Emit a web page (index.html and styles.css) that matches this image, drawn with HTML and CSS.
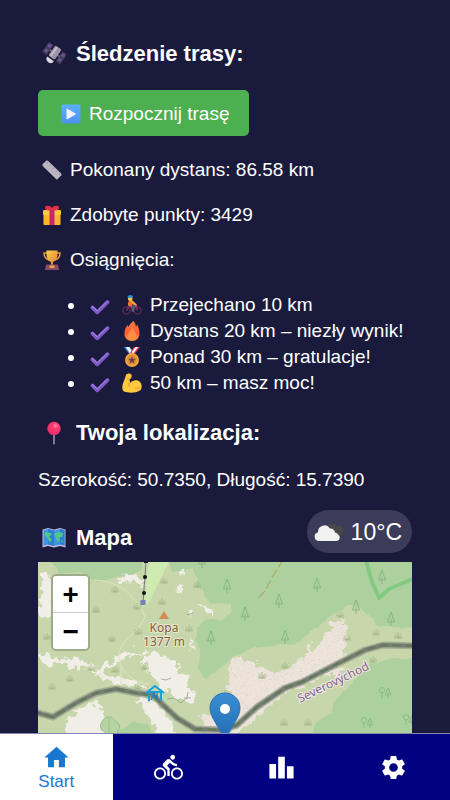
FILE: index.html
```
<!DOCTYPE html>
<html lang="pl">
<head>
<meta charset="utf-8">
<meta name="viewport" content="width=device-width, initial-scale=1">
<title>Śledzenie trasy</title>
<link rel="stylesheet" href="styles.css">
</head>
<body>
<svg class="defs" aria-hidden="true">
  <defs>
    <linearGradient id="gold" x1="0" y1="0" x2="1" y2="1"><stop offset="0" stop-color="#ffd34d"/><stop offset="1" stop-color="#d97a35"/></linearGradient>
    <linearGradient id="flameFill" x1="0" y1="0" x2="0" y2="1"><stop offset="0" stop-color="#ff783d"/><stop offset="0.6" stop-color="#ff5c35"/><stop offset="1" stop-color="#ff9a45"/></linearGradient>
    <linearGradient id="blueFill" x1="0" y1="0" x2="0" y2="1"><stop offset="0" stop-color="#5cb0ff"/><stop offset="1" stop-color="#4c92f0"/></linearGradient>
    <linearGradient id="tickFill" x1="0" y1="0" x2="1" y2="1"><stop offset="0" stop-color="#8a62d8"/><stop offset="1" stop-color="#7550b8"/></linearGradient>
    <radialGradient id="pinFill" cx="0.6" cy="0.3" r="0.7"><stop offset="0" stop-color="#ff8fa0"/><stop offset="0.3" stop-color="#fb3f70"/><stop offset="1" stop-color="#e8296a"/></radialGradient>
    <linearGradient id="markerFill" x1="0" y1="0" x2="0" y2="1"><stop offset="0" stop-color="#3b8fd4"/><stop offset="1" stop-color="#2069b0"/></linearGradient>
    <symbol id="tick" viewBox="0 0 20 20">
      <path d="M2.500 10.500 7.200 15.300 17.500 5.200" fill="none" stroke="url(#tickFill)" stroke-width="3.800" stroke-linejoin="round" stroke-linecap="round"/>
      <path d="M2.500 9.600 7.200 14 17.300 4.500" fill="none" stroke="#a38bdc" stroke-width="1" stroke-linecap="round"/>
    </symbol>
    <symbol id="shrub" viewBox="0 0 10 8"><path d="M1 7H9M5 7V1M5 7 2 2.500M5 7 8 2.500M5 7 1 5M5 7 9 5" fill="none" stroke="#a3b586" stroke-width=".8"/></symbol>
    <symbol id="conifer" viewBox="0 0 10 16"><path d="M5 1 1.500 11H8.500ZM5 8V15" fill="none" stroke="#8bb580" stroke-width="1"/></symbol>
    <symbol id="grove" viewBox="0 0 14 12"><path d="M4 11V5M4 6a2.700 2.700 0 1 1 .1 0M10 1 7 8H13ZM10 5V11" fill="none" stroke="#8bb580" stroke-width=".9"/></symbol>
    <filter id="rough" x="-10%" y="-10%" width="120%" height="120%">
      <feTurbulence type="fractalNoise" baseFrequency="0.14" numOctaves="3" seed="4" result="n"/>
      <feDisplacementMap in="SourceGraphic" in2="n" scale="14" xChannelSelector="R" yChannelSelector="G"/>
    </filter>
    <filter id="edge"><feTurbulence type="fractalNoise" baseFrequency="0.1" numOctaves="2" seed="2" result="n"/><feDisplacementMap in="SourceGraphic" in2="n" scale="5" xChannelSelector="R" yChannelSelector="G"/></filter>
    <pattern id="stipple" width="5" height="5" patternUnits="userSpaceOnUse"><rect width="5" height="5" fill="#ece3da"/><circle cx="1" cy="1" r=".5" fill="#dccfc6"/><circle cx="3.500" cy="3.500" r=".5" fill="#dccfc6"/></pattern>
  </defs>
</svg>

<div class="app">
  <main class="content">
    <h2 class="title">
      <svg class="title-icon" viewBox="0 0 24 24" aria-hidden="true">
        <g transform="rotate(35 12 12)">
          <path d="M1 5H6.500V17H1ZM17.500 5H23V17H17.500Z" fill="#453e59"/>
          <path d="M2.200 6.500H5.300V9.500H2.200ZM2.200 12H5.300V15H2.200ZM18.700 6.500H21.800V9.500H18.700ZM18.700 12H21.800V15H18.700Z" fill="#6c549a"/>
          <path d="M6 11H18" stroke="#7b7388" stroke-width="1.500"/>
          <rect x="8.200" y="4" width="7.600" height="12.500" rx="1.500" fill="#9c93a8"/><path d="M10.500 5V15.500" stroke="#c3bccb" stroke-width="2"/>
          <path d="M8 18H16A4 4 0 0 1 8 18Z" fill="#ded9e4"/>
        </g>
      </svg>Śledzenie trasy:</h2>
    <button class="start-button" type="button">
      <svg class="text-icon" viewBox="0 0 20 20" aria-hidden="true"><rect x=".5" y=".5" width="19" height="19" rx="1.500" fill="url(#blueFill)"/><path d="M6 5V15L14.500 10Z" fill="#f7f1ff" stroke="#f7f1ff" stroke-linejoin="round"/></svg>Rozpocznij trasę</button>

    <p class="line">
      <svg class="text-icon" viewBox="0 0 20 20" aria-hidden="true"><path d="M.5 4.300 4.500 .6Q5.200 .1 6 .8L19.200 13.500Q19.900 14.400 19.300 15.200L15.500 19.200Q14.800 19.700 14 19.100L.7 6Q.1 5 .5 4.300Z" fill="#bbb5c1"/><path d="M6 2 4.800 3.500M9 4.500 8 5.800M12 7.500 11 8.800M15 10.500 14 11.800M18 13.500 17 14.800" stroke="#8d7aa5" stroke-width=".9"/></svg>Pokonany dystans: 86.58 km</p>
    <p class="line">
      <svg class="text-icon" viewBox="0 0 20 20" aria-hidden="true"><rect x="1.500" y="9" width="17" height="11" rx="1" fill="#fbb52f"/><rect x="1" y="5" width="18" height="5" rx="1" fill="#ffc93b"/><rect x="7.500" y="5" width="5" height="15" fill="#c8286b"/><path d="M10 5C6 6 2.500 5 3 2.500S8 0 10 3C12 0 16.500 0 17 2.500S14 6 10 5Z" fill="#e52f45"/></svg>Zdobyte punkty: 3429</p>
    <p class="line">
      <svg class="text-icon" viewBox="0 0 20 20" aria-hidden="true"><path d="M5 3H2C2 7 4 9 7 10M15 3H18C18 7 16 9 13 10" fill="none" stroke="#e99a3d" stroke-width="1.500"/><path d="M4.500 .5H15.500C16 8 14 11 11 12V15H9V12C6 11 4 8 4.500 .5Z" fill="url(#gold)"/><path d="M4 14.500H16L17 20H3Z" fill="#8b4a66"/><rect x="7.500" y="15.500" width="5" height="2.500" fill="#e5a94c"/></svg>Osiągnięcia:</p>

    <ul class="achievements">
      <li><svg class="text-icon tick" aria-hidden="true"><use href="#tick"/></svg><svg class="text-icon" viewBox="0 0 20 20" aria-hidden="true"><g fill="none" stroke="#5b2c54" stroke-width="1.400"><circle cx="4.500" cy="15.500" r="3.600"/><circle cx="15.500" cy="15.500" r="3.600"/></g><path d="M4.500 15.500 8 10.500 11 15.500 14 10 15.500 15.500" fill="none" stroke="#a93050" stroke-width="1.200"/><path d="M7 10 12 12 10.500 16.500" fill="none" stroke="#4e5c85" stroke-width="2.600"/><path d="M6 10.500C5.500 7 7 4.500 10.500 5.500L14 9 12.500 10.500 10.500 9 9.500 11.500Z" fill="#f3762f"/><path d="M10 6.500 14 10" stroke="#ffbc45" stroke-width="1.600" stroke-linecap="round"/><circle cx="8.200" cy="3.700" r="2.300" fill="#ffc452"/><path d="M5.500 3Q5.500 0 8.300 0T11 2.800Z" fill="#328dd0"/></svg>Przejechano 10 km</li>
      <li><svg class="text-icon tick" aria-hidden="true"><use href="#tick"/></svg><svg class="text-icon" viewBox="0 0 20 20" aria-hidden="true"><path d="M11.500 0C9 2 7 4 6.500 6L5.500 4C3 7 2.500 10 2.500 13C2.500 17 5.500 20 10 20S17.500 17 17.500 12.500C17.500 9 16.500 6 15 3.500L14 6C13.500 3 12.500 1 11.500 0Z" fill="url(#flameFill)"/><path d="M11 6C11 10 14 10 14 14.500C14 17.500 12 19 10 19S5.500 17 5.500 14.500 9 9.500 11 6Z" fill="#ff8d42"/></svg>Dystans 20 km – niezły wynik!</li>
      <li><svg class="text-icon tick" aria-hidden="true"><use href="#tick"/></svg><svg class="text-icon" viewBox="0 0 20 20" aria-hidden="true"><path d="M2 0H8L12 6 8 8Z" fill="#4b91e5"/><path d="M4 0H7L11 6 9 8Z" fill="#fff"/><path d="M18 0H12L8 6 12 8Z" fill="#d93d5c"/><path d="M16 0H13.500L10 5 11 7Z" fill="#fff"/><circle cx="10" cy="13" r="7" fill="#f2a53b"/><circle cx="10" cy="13" r="5" fill="#df8e38"/><path d="m10 9.200 1.100 2.500 2.700.3-2 1.800.6 2.700-2.400-1.400-2.400 1.400.6-2.700-2-1.800 2.700-.3Z" fill="#70433f"/></svg>Ponad 30 km – gratulacje!</li>
      <li><svg class="text-icon tick" aria-hidden="true"><use href="#tick"/></svg><svg class="text-icon" viewBox="0 0 20 20" aria-hidden="true"><path d="M4 2C5 0 9 0 9.500 2S9 6 7.500 6.500L8 10C11 6.500 15 6.500 17.500 8.500C20.500 11 20 16 18 17.500C13 20.500 6 20 2 18.500C-.5 17 0 12 2 8Z" fill="#ffc83d"/><path d="M7 6 5 5.500M8 10C6.500 11 6.500 13 8 14M13 15C15 16 17 15 18 14" fill="none" stroke="#e8972e" stroke-width="1"/></svg>50 km – masz moc!</li>
    </ul>

    <h2 class="title location-title">
      <svg class="title-icon" viewBox="0 0 24 24" aria-hidden="true"><path d="M12 12V22.500" stroke="#8f8799" stroke-width="1.800" stroke-linecap="round"/><circle cx="12" cy="7.500" r="6.700" fill="url(#pinFill)"/></svg>Twoja lokalizacja:</h2>
    <p class="line">Szerokość: 50.7350, Długość: 15.7390</p>

    <section class="map-section">
      <h2 class="title">
        <svg class="title-icon" viewBox="0 0 24 24" aria-hidden="true"><path d="M.5 3.500 6 2 12 3.500 18 2 23.500 3.500V21.500L18 20 12 21.500 6 20 .5 21.500Z" fill="#c8b8dc"/><path d="M1.500 4 6 3 12 4.500 18 3 22.500 4V19.500L18 18.500 12 20 6 18.500 1.500 19.500Z" fill="#3e95e0"/><path d="M6 3 12 4.500V20L6 18.500ZM18 3 22.500 4V19.500L18 18.500Z" fill="#2c7ed0"/><path d="M3 6 9 7 10 9 7 10 8 12 10 13 8 17 6 13 3 9ZM13 7 17 6 21 7 20 11 17 11 18 14 16 16 14 12 12.500 10ZM19 14 21 15 20 17Z" fill="#52c68a"/></svg>Mapa</h2>
      <div class="weather">
        <svg class="weather-icon" viewBox="0 0 32 24" aria-hidden="true"><path d="M12 14A4.500 4.500 0 0 1 14 6A6 6 0 0 1 24 6A4.300 4.300 0 0 1 30 10A3 3 0 0 1 29 15H20Z" fill="#484848"/><path d="M5.500 21A4.500 4.500 0 0 1 5 12.200A6.500 6.500 0 0 1 17 8.500A4.500 4.500 0 0 1 22 12.500A4 4 0 0 1 25 14.500A3.500 3.500 0 0 1 24 21Z" fill="#f2f2f2"/></svg>10°C</div>
      <div class="map">
        <svg class="map-canvas" viewBox="0 0 374 300" preserveAspectRatio="xMidYMin slice" role="img" aria-label="Mapa okolicy">
          <rect width="374" height="300" fill="#c8d7ab"/>
          <g fill="#add19e" filter="url(#edge)">
            <path d="M10-5 22 12 40 10 60 20 75 16 95 12 104 8 106-5ZM129-5 134 10 148 8 154 6 160 18 158 24 166 28 172 42 188 40 194 45 192 52 182 58 168 56 160 66 158 78 163 90 160 103 164 114 169 118 180 108 190 100 200 92 215 86 235 84 250 83 262 80 272 70 285 60 300 50 308 43 319 45 330 52 340 63 355 66 385 67V-5Z"/>
            <path d="M275 171 277 161 294 151 295 141 314 121 330 104 354 96 385 98V320H270Z"/>
            <path d="M75 175 80 168 95 160 110 163 118 175Z"/>
          </g>
          <path d="M171 49C176 44 184 47 192 41L194 49C188 56 176 59 167 55Z" fill="#c8d7ab"/>
          <path d="M111-2H132L127 7 124 14 118 26 112 39 105 46 108 25Z" fill="#cdebb0"/>
          <g fill="#f1eee7" filter="url(#rough)">
            <path d="M3 12 10 10 18 22 14 45 17 52 9 55 0 50Z"/>
            <path d="M80 18 95 10 100 17 107 18 104 22 88 21Z"/>
            <path d="M0 91 12 95 23 98 32 94 48 99 55 106 38 107 24 102 8 104Z"/>
            <path d="M46 105 60 107 72 100 84 91 96 87 102 93 92 95 78 101 64 112Z"/>
            <path d="M55 111 77 116 100 119 112 126 98 124 78 123Z"/>
            <path d="M104 92 118 91 130 95 132 121 128 130 110 110 103 98Z"/>
            <path d="M128 95 140 98 142 110 152 113 148 124 158 130 155 140 134 135 126 116Z"/>
            <path d="M29 177 28 158 39 147 54 140 66 150 72 165 75 179Z"/>
            <path d="M98 137 115 136 132 158 139 172 120 176 112 158Z"/>
            <path d="M140 8 147 10 143 15ZM138 24 145 25 142 32ZM162 42 172 46 175 54 166 49ZM149 50 157 51 154 56ZM153 75 158 85 154 90Z"/>
          </g>
          <path d="M64 160a7 7 0 0 1 13-1 6 6 0 0 1 3 10 7 7 0 0 1-13 1 6 6 0 0 1-3-10ZM71 157V177" fill="#b6d3a2" stroke="#9bc08c"/>
          <g fill="url(#stipple)" filter="url(#rough)">
            <path d="M190 118 193 100 200 96 210 102 216 98 226 107 240 112 253 105 268 93 270 81 276 90 286 75 296 57 307 59 309 76 306 97 290 111 250 130 218 156 200 171 170 174 162 155 182 148 191 135Z"/>
            <path d="M290 112 309 103 300 117Z"/>
          </g>
          <path d="M56 18C82 19 98 34 107 55C98 75 80 79 81 95C83 112 96 121 112 122M83 103V125" fill="none" stroke="#dee5bd" stroke-width="1"/>
          <path d="M328-2 334 20 341 36 351 27 374 17" fill="none" stroke="#83c982" stroke-width="4" stroke-linejoin="round"/>
          <path d="M245-2 235 14 227 29 219 37" fill="none" stroke="#b1a95e" stroke-width="1.200" stroke-dasharray="9 3"/>
          <g fill="none" stroke="#8a9586" stroke-width="1" opacity=".7"><path d="M123 117 128 118 133 116M129 137 136 136 143 141 149 136 150 130M146 136 153 136M149 53 155 51"/></g>
          <g>
            <use href="#shrub" x="72" y="23" width="10" height="8"/><use href="#shrub" x="53" y="43" width="10" height="8"/><use href="#shrub" x="94" y="40" width="10" height="8"/><use href="#shrub" x="119" y="35" width="10" height="8"/><use href="#shrub" x="95" y="65" width="10" height="8"/><use href="#shrub" x="69" y="72" width="10" height="8"/><use href="#shrub" x="4" y="70" width="10" height="8"/><use href="#shrub" x="48" y="101" width="10" height="8"/><use href="#shrub" x="27" y="112" width="10" height="8"/><use href="#shrub" x="9" y="120" width="10" height="8"/><use href="#shrub" x="102" y="100" width="10" height="8"/><use href="#shrub" x="72" y="103" width="10" height="8"/><use href="#shrub" x="95" y="120" width="10" height="8"/><use href="#shrub" x="121" y="14" width="10" height="8"/><use href="#shrub" x="154" y="18" width="10" height="8"/><use href="#shrub" x="146" y="62" width="10" height="8"/><use href="#shrub" x="219" y="109" width="10" height="8"/><use href="#shrub" x="242" y="99" width="10" height="8"/><use href="#shrub" x="297" y="48" width="10" height="8"/><use href="#shrub" x="333" y="66" width="10" height="8"/><use href="#shrub" x="355" y="69" width="10" height="8"/><use href="#shrub" x="304" y="71" width="10" height="8"/><use href="#shrub" x="330" y="93" width="10" height="8"/><use href="#shrub" x="241" y="156" width="10" height="8"/><use href="#shrub" x="265" y="156" width="10" height="8"/><use href="#shrub" x="182" y="127" width="10" height="8"/>
            <use href="#conifer" x="159" y="-9" width="10" height="16"/><use href="#conifer" x="184" y="16" width="10" height="16"/><use href="#conifer" x="236" y="31" width="10" height="16"/><use href="#conifer" x="202" y="44" width="10" height="16"/><use href="#conifer" x="168" y="68" width="10" height="16"/><use href="#conifer" x="242" y="67" width="10" height="16"/><use href="#conifer" x="274" y="15" width="10" height="16"/><use href="#conifer" x="339" y="7" width="10" height="16"/><use href="#conifer" x="348" y="49" width="10" height="16"/><use href="#conifer" x="313" y="37" width="10" height="16"/><use href="#grove" x="340" y="125" width="14" height="12"/><use href="#grove" x="322" y="155" width="14" height="12"/><use href="#grove" x="364" y="152" width="14" height="12"/>
          </g>
          <g fill="none" stroke-linejoin="round">
            <path d="M-5 150 0 151 15 155 38 141 58 131 78 127 98 131 115 133 124 142 139 156 157 167 185 168 199 163 219 145 247 126 264 120 297 103 327 88 345 83 380 84" stroke="#8e9685" stroke-opacity=".65" stroke-width="7"/>
            <path d="M-5 150 0 151 15 155 38 141 58 131 78 127 98 131 115 133 124 142 139 156 157 167 185 168 199 163 219 145 247 126 264 120 297 103 327 88 345 83 380 84" stroke="#747e72" stroke-width="4"/>
            <path d="M-5 150 0 151 15 155 38 141 58 131 78 127 98 131 115 133 124 142 139 156 157 167 185 168 199 163 219 145 247 126 264 120 297 103 327 88 345 83 380 84" stroke="#647a59" stroke-width="2" stroke-dasharray="8 5"/>
          </g>
          <path d="M108-2 107 14 105 40" fill="none" stroke="#777" stroke-width="1"/><circle cx="107" cy="15" r="2" fill="#111"/><circle cx="106" cy="31" r="2" fill="#111"/><rect x="106" y="-1" width="4" height="2" fill="#111"/><rect x="102.500" y="38" width="5" height="5" fill="#7780b8"/>
          <path d="M126 49 131 57H121Z" fill="#d08e54"/>
          <text class="peak" text-anchor="middle"><tspan x="126" y="70">Kopa</tspan><tspan x="126" y="84">1377 m</tspan></text>
          <path d="M108 131 117 124 126 131M111 129V139M123 129V139M111 130H123" fill="none" stroke="#14a2dc" stroke-width="2"/><path d="M116 130 115 134 113 138M116 132 119 138M119 131V138" fill="none" stroke="#147fc5" stroke-width="1.200"/>
          <text class="street" text-anchor="middle" transform="translate(297 124) rotate(-26)">Severovýchod</text>
          <path d="M187 131C179 131 172 137 172 146C172 156 181 163 187 180C193 163 202 156 202 146C202 137 195 131 187 131Z" fill="url(#markerFill)" stroke="#2b75b5" stroke-width="1"/><circle cx="187" cy="147" r="5" fill="#fff"/>
        </svg>
        <div class="zoom"><button type="button" aria-label="Przybliż">+</button><button type="button" aria-label="Oddal">−</button></div>
      </div>
    </section>
  </main>

  <nav class="tabs">
    <a class="tab active" href="#start"><svg viewBox="0 0 24 24" aria-hidden="true"><path d="M10 20v-6h4v6h5v-8h3L12 3 2 12h3v8z"/></svg>Start</a>
    <a class="tab" href="#trasy" aria-label="Trasy"><svg viewBox="0 0 24 24" aria-hidden="true"><path d="M15.500 5.500c1.100 0 2-.9 2-2s-.9-2-2-2-2 .9-2 2 .9 2 2 2zM5 12c-2.800 0-5 2.200-5 5s2.200 5 5 5 5-2.200 5-5-2.200-5-5-5zm0 8.500c-1.900 0-3.500-1.600-3.500-3.500s1.600-3.500 3.500-3.500 3.500 1.600 3.500 3.500-1.600 3.500-3.500 3.500zm5.800-10l2.400-2.400.8.8c1.300 1.300 3 2.100 5.100 2.100V9c-1.500 0-2.700-.6-3.600-1.500l-1.900-1.900c-.5-.4-1-.6-1.600-.6s-1.100.2-1.400.6L7.800 8.400c-.4.4-.6.9-.6 1.400 0 .6.2 1.100.6 1.400L11 14v5h2v-6.200l-2.200-2.300zM19 12c-2.800 0-5 2.200-5 5s2.200 5 5 5 5-2.200 5-5-2.200-5-5-5zm0 8.500c-1.900 0-3.500-1.600-3.500-3.500s1.600-3.500 3.500-3.500 3.500 1.600 3.500 3.500-1.600 3.500-3.500 3.500z"/></svg></a>
    <a class="tab" href="#ranking" aria-label="Ranking"><svg viewBox="0 0 24 24" aria-hidden="true"><path d="M7.500 21H2V9h5.500v12zm7.250-18h-5.500v18h5.500V3zM22 11h-5.500v10H22V11z"/></svg></a>
    <a class="tab" href="#ustawienia" aria-label="Ustawienia"><svg viewBox="0 0 24 24" aria-hidden="true"><path d="M19.140 12.940c.04-.3.06-.61.06-.94 0-.32-.02-.64-.07-.94l2.030-1.580c.18-.14.23-.41.12-.61l-1.920-3.320c-.12-.22-.37-.29-.59-.22l-2.390.96c-.5-.38-1.030-.7-1.620-.94l-.36-2.540c-.04-.24-.24-.41-.48-.41h-3.840c-.24 0-.43.17-.47.41l-.36 2.540c-.59.24-1.130.57-1.620.94l-2.390-.96c-.22-.08-.47 0-.59.22L2.740 8.870c-.12.21-.08.47.12.61l2.030 1.580c-.05.3-.09.63-.09.94s.02.64.07.94l-2.030 1.580c-.18.14-.23.41-.12.61l1.920 3.320c.12.22.37.29.59.22l2.390-.96c.5.38 1.030.7 1.620.94l.36 2.540c.05.24.24.41.48.41h3.840c.24 0 .44-.17.47-.41l.36-2.540c.59-.24 1.130-.56 1.620-.94l2.390.96c.22.08.47 0 .59-.22l1.920-3.320c.12-.22.07-.47-.12-.61l-2.010-1.580zM12 15.600c-1.980 0-3.600-1.620-3.600-3.600s1.620-3.600 3.600-3.600 3.600 1.620 3.600 3.600-1.620 3.600-3.600 3.600z"/></svg></a>
  </nav>
</div>
</body>
</html>
```
FILE: styles.css
```
* { box-sizing: border-box; }
body {
  margin: 0;
  background: #1a1a3d;
  color: #fff;
  font: 19px/26px "Liberation Sans", Arial, sans-serif;
}
.defs { position: absolute; width: 0; height: 0; }
.app { display: flex; flex-direction: column; height: 100vh; }
.content {
  flex: 1;
  min-height: 0;
  overflow-y: auto;
  scrollbar-width: none;
  padding: 40px 38px 24px;
}
.title { margin: 0; font-size: 22px; line-height: 28px; font-weight: bold; }
.title-icon { width: 24px; height: 24px; margin: 0 10px 0 4px; vertical-align: -5px; }
.text-icon { width: 20px; height: 20px; margin: 0 8px 0 4px; vertical-align: -4px; }
.start-button {
  display: block;
  height: 46px;
  margin: 22px 0 21px;
  padding: 2px 20px 0 19px;
  border: 0;
  border-radius: 5px;
  background: #4caf50;
  color: #fff;
  font: inherit;
}
.line { margin: 0 0 19px; }
.achievements { margin: 0; padding: 0 0 0 48px; }
.tick { vertical-align: -6px; }
.location-title { margin: 23px 0 20px; }
.map-section { position: relative; margin-top: 31px; }
.weather {
  position: absolute;
  top: -14px;
  right: 0;
  display: flex;
  align-items: center;
  gap: 6px;
  height: 43px;
  padding: 0 10px 0 6px;
  border-radius: 22px;
  background: #3c3b59;
  font-size: 23px;
}
.weather-icon { width: 32px; height: 24px; }
.map { position: relative; height: 300px; margin-top: 10px; overflow: hidden; }
.map-canvas { display: block; width: 100%; height: 100%; }
.peak {
  font: 12px "Noto Sans", sans-serif;
  fill: #8a5a3e;
  stroke: #e4e8cf;
  stroke-width: 2px;
  paint-order: stroke;
}
.street {
  font: 12px "Noto Sans", sans-serif;
  fill: #84648f;
  stroke: #eeeae0;
  stroke-width: 2px;
  paint-order: stroke;
}
.zoom {
  position: absolute;
  top: 12px;
  left: 13px;
  border: 2px solid #9cab88;
  border-radius: 5px;
  overflow: hidden;
}
.zoom button {
  display: block;
  width: 35px;
  height: 36px;
  padding: 0;
  border: 0;
  background: #fff;
  color: #000;
  font: bold 26px/36px "DejaVu Sans Mono", monospace;
}
.zoom button + button { height: 37px; border-top: 1px solid #ccc; }
.tabs {
  display: grid;
  grid-template-columns: repeat(4, 1fr);
  height: 67px;
  border-top: 1px solid #8585b5;
}
.tab {
  display: flex;
  flex-direction: column;
  align-items: center;
  justify-content: center;
  background: #000080;
  color: #fff;
  font-size: 17px;
  line-height: 20px;
  text-decoration: none;
}
.tab svg { width: 29px; height: 29px; fill: currentColor; }
.tab.active { background: #fff; color: #1976d2; }
```
